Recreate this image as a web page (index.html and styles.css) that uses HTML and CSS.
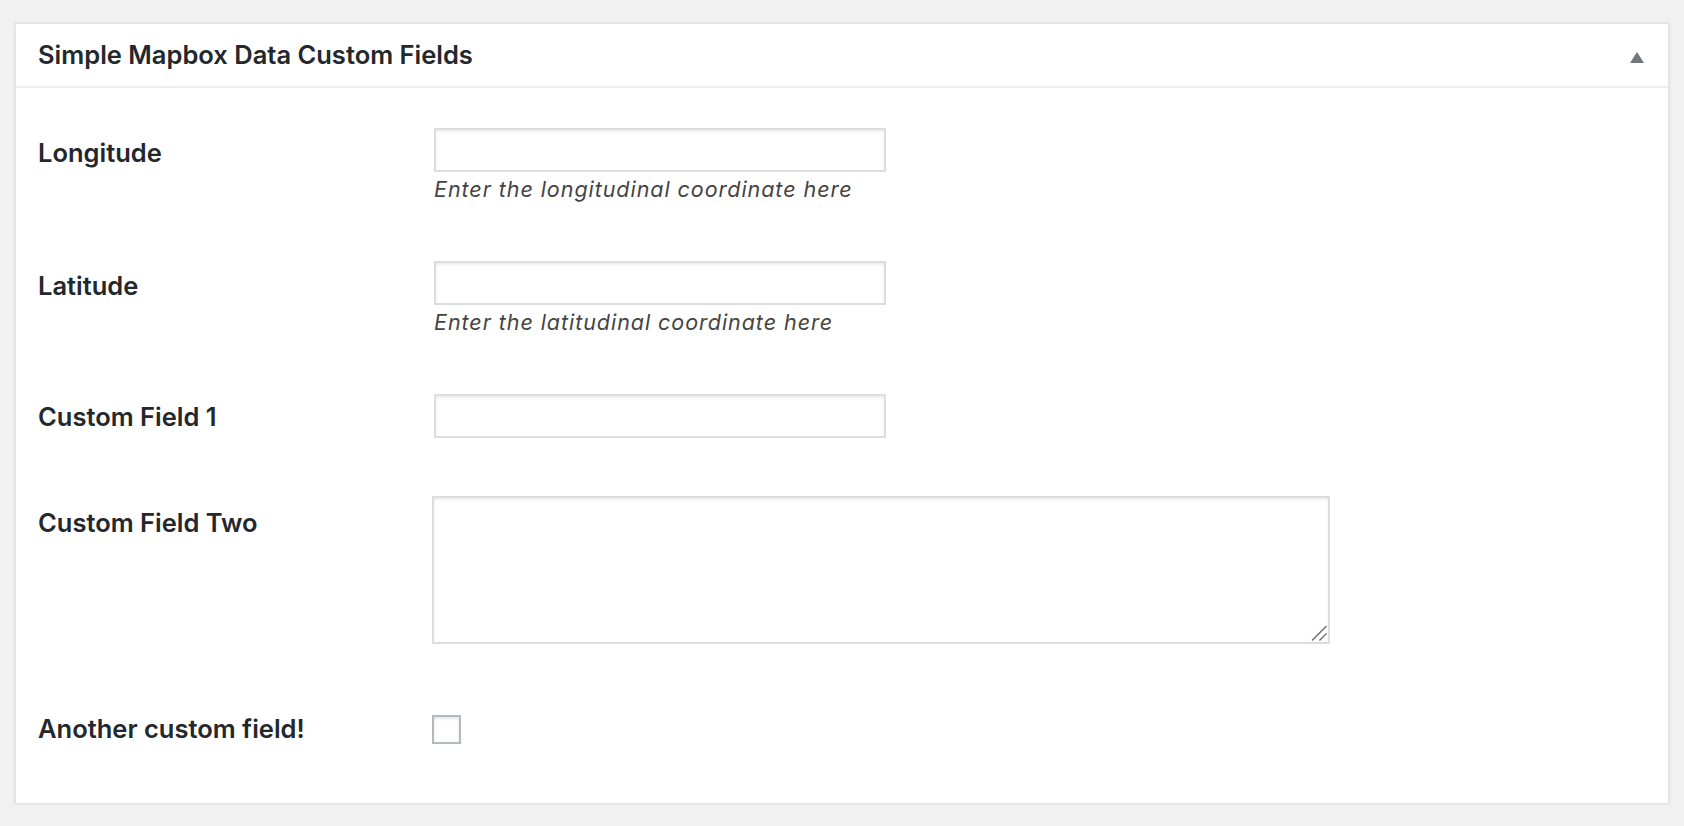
FILE: index.html
```html
<!DOCTYPE html>
<html lang="en">
<head>
<meta charset="utf-8">
<title>Simple Mapbox Data Custom Fields</title>
<link rel="stylesheet" href="styles.css">
</head>
<body>
<div class="postbox">
  <div class="postbox-header">
    <h2 class="hndle">Simple Mapbox Data Custom Fields</h2>
    <button class="toggle" type="button" aria-label="Toggle panel">
      <svg width="14" height="11" viewBox="0 0 14 11"><path d="M7 0 L14 11 L0 11 Z" fill="#72777c"/></svg>
    </button>
  </div>
  <div class="inside">
    <div class="field-row">
      <label class="field-label" for="lng">Longitude</label>
      <div class="field-control">
        <input class="text-input" id="lng" type="text">
        <p class="description">Enter the longitudinal coordinate here</p>
      </div>
    </div>
    <div class="field-row">
      <label class="field-label" for="lat">Latitude</label>
      <div class="field-control">
        <input class="text-input" id="lat" type="text">
        <p class="description">Enter the latitudinal coordinate here</p>
      </div>
    </div>
    <div class="field-row">
      <label class="field-label field-label-short" for="cf1">Custom Field 1</label>
      <div class="field-control">
        <input class="text-input" id="cf1" type="text">
      </div>
    </div>
    <div class="field-row">
      <label class="field-label field-label-area" for="cf2">Custom Field Two</label>
      <div class="field-control">
        <div class="area-wrap">
          <textarea class="text-area" id="cf2"></textarea>
          <svg class="resize-grip" width="16" height="16" viewBox="0 0 16 16" aria-hidden="true">
            <path d="M1 15.5 L15.5 1 M8.5 15.5 L15.5 8.5" stroke="#6b6b6b" stroke-width="1.4" fill="none"/>
          </svg>
        </div>
      </div>
    </div>
    <div class="field-row field-row-last">
      <label class="field-label field-label-check" for="cf3">Another custom field!</label>
      <div class="field-control">
        <input class="check" id="cf3" type="checkbox">
      </div>
    </div>
  </div>
</div>
</body>
</html>
```

FILE: styles.css
```css
html, body {
  margin: 0;
  padding: 0;
}

body {
  background: #f1f1f1;
  font-family: Inter, "Liberation Sans", Arial, sans-serif;
  color: #23282d;
  padding: 22px 14px 0;
}

.postbox {
  background: #fff;
  border: 2px solid #e5e5e5;
  box-shadow: 0 2px 2px rgba(0, 0, 0, 0.05);
}

.postbox-header {
  height: 62px;
  border-bottom: 2px solid #eeeeee;
  display: flex;
  align-items: center;
  justify-content: space-between;
  padding: 0 24px 0 22px;
}

.hndle {
  margin: 0;
  font-size: 25.5px;
  font-weight: 600;
  line-height: 32px;
  color: #23282d;
}

.toggle {
  border: 0;
  background: none;
  padding: 0;
  margin: 4px 0 0 0;
  width: 14px;
  height: 11px;
  display: flex;
}

.inside {
  padding: 0 22px 58px;
}

.field-row {
  display: grid;
  grid-template-columns: 394px 1fr;
  padding: 40px 0 17px;
}

.field-row-last {
  padding-bottom: 0;
}

.field-label {
  font-size: 25.5px;
  font-weight: 600;
  line-height: 32px;
  padding-top: 8.5px;
  color: #23282d;
}

.field-label-short {
  padding-top: 7px;
}

.field-label-area {
  padding-top: 12px;
}

.field-label-check {
  padding-top: 11.5px;
}

.field-control {
  display: flex;
  flex-direction: column;
  align-items: flex-start;
}

.text-input {
  box-sizing: border-box;
  width: 452px;
  height: 44px;
  margin: 0 0 0 2px;
  border: 2px solid #dddddd;
  background: #fff;
  box-shadow: inset 0 2px 3px rgba(0, 0, 0, 0.07);
  font: inherit;
  font-size: 22px;
  padding: 4px 8px;
  outline: none;
}

.description {
  margin: 2px 0 0 2px;
  font-size: 21.5px;
  line-height: 30px;
  letter-spacing: 0.95px;
  font-style: italic;
  color: #444;
}

.area-wrap {
  position: relative;
  display: flex;
  margin-top: 1px;
}

.text-area {
  box-sizing: border-box;
  width: 898px;
  height: 148px;
  margin: 0;
  border: 2px solid #dddddd;
  background: #fff;
  box-shadow: inset 0 2px 3px rgba(0, 0, 0, 0.07);
  font: inherit;
  font-size: 22px;
  padding: 4px 8px;
  outline: none;
  resize: none;
}

.resize-grip {
  position: absolute;
  right: 3px;
  bottom: 3px;
}

.check {
  appearance: none;
  -webkit-appearance: none;
  box-sizing: border-box;
  width: 29px;
  height: 29px;
  margin: 14px 0 0 0;
  border: 2px solid #b4b9be;
  background: #fff;
  box-shadow: inset 0 2px 3px rgba(0, 0, 0, 0.1);
}
```
